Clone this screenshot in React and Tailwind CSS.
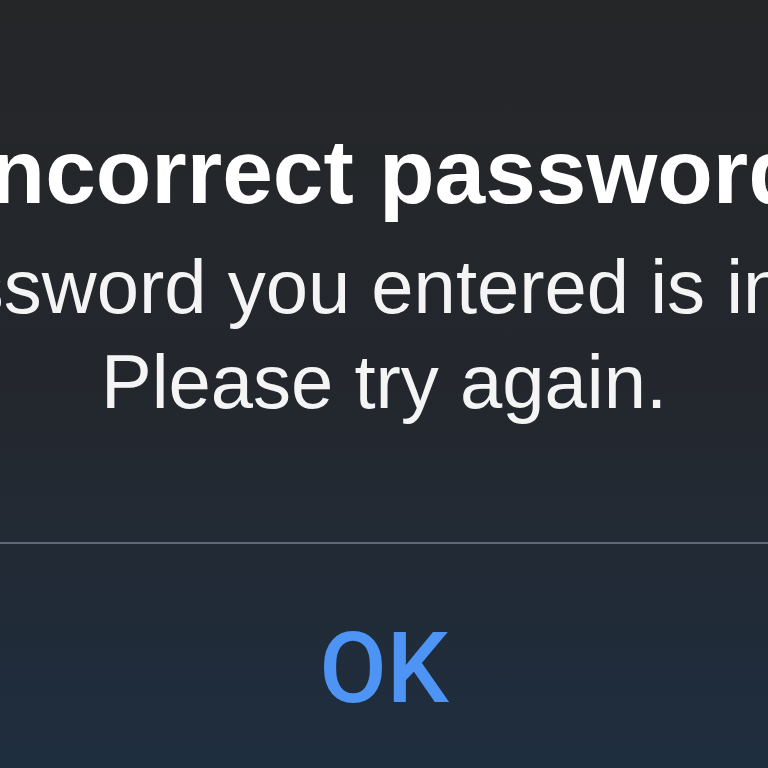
export default function App() {
  return (
    <div className="h-[768px] w-[768px] overflow-hidden bg-linear-to-b from-[#252628] via-[#23272d] to-[#1f2e3f] text-white">
      {/* title + message */}
      <div className="pt-[126px] font-['Liberation_Sans',Arial,sans-serif]">
        <div className="flex justify-center">
          <h1 className="whitespace-nowrap text-[91px] font-bold leading-none">Incorrect password</h1>
        </div>
        <div className="mt-[22px] text-[76px] leading-[95px] text-[#f4f4f4]">
          <div className="flex justify-center">
            <p className="whitespace-nowrap">The password you entered is incorrect.</p>
          </div>
          <div className="flex justify-center">
            <p className="whitespace-nowrap">Please try again.</p>
          </div>
        </div>
      </div>

      <div className="mt-[113px] h-[2px] bg-[#5f6872]" />

      {/* action */}
      <div className="mt-[76px] flex justify-center">
        <button className="font-['Roboto',sans-serif] text-[98px] font-medium leading-none text-[#4d94f5]">OK</button>
      </div>
    </div>
  );
}
